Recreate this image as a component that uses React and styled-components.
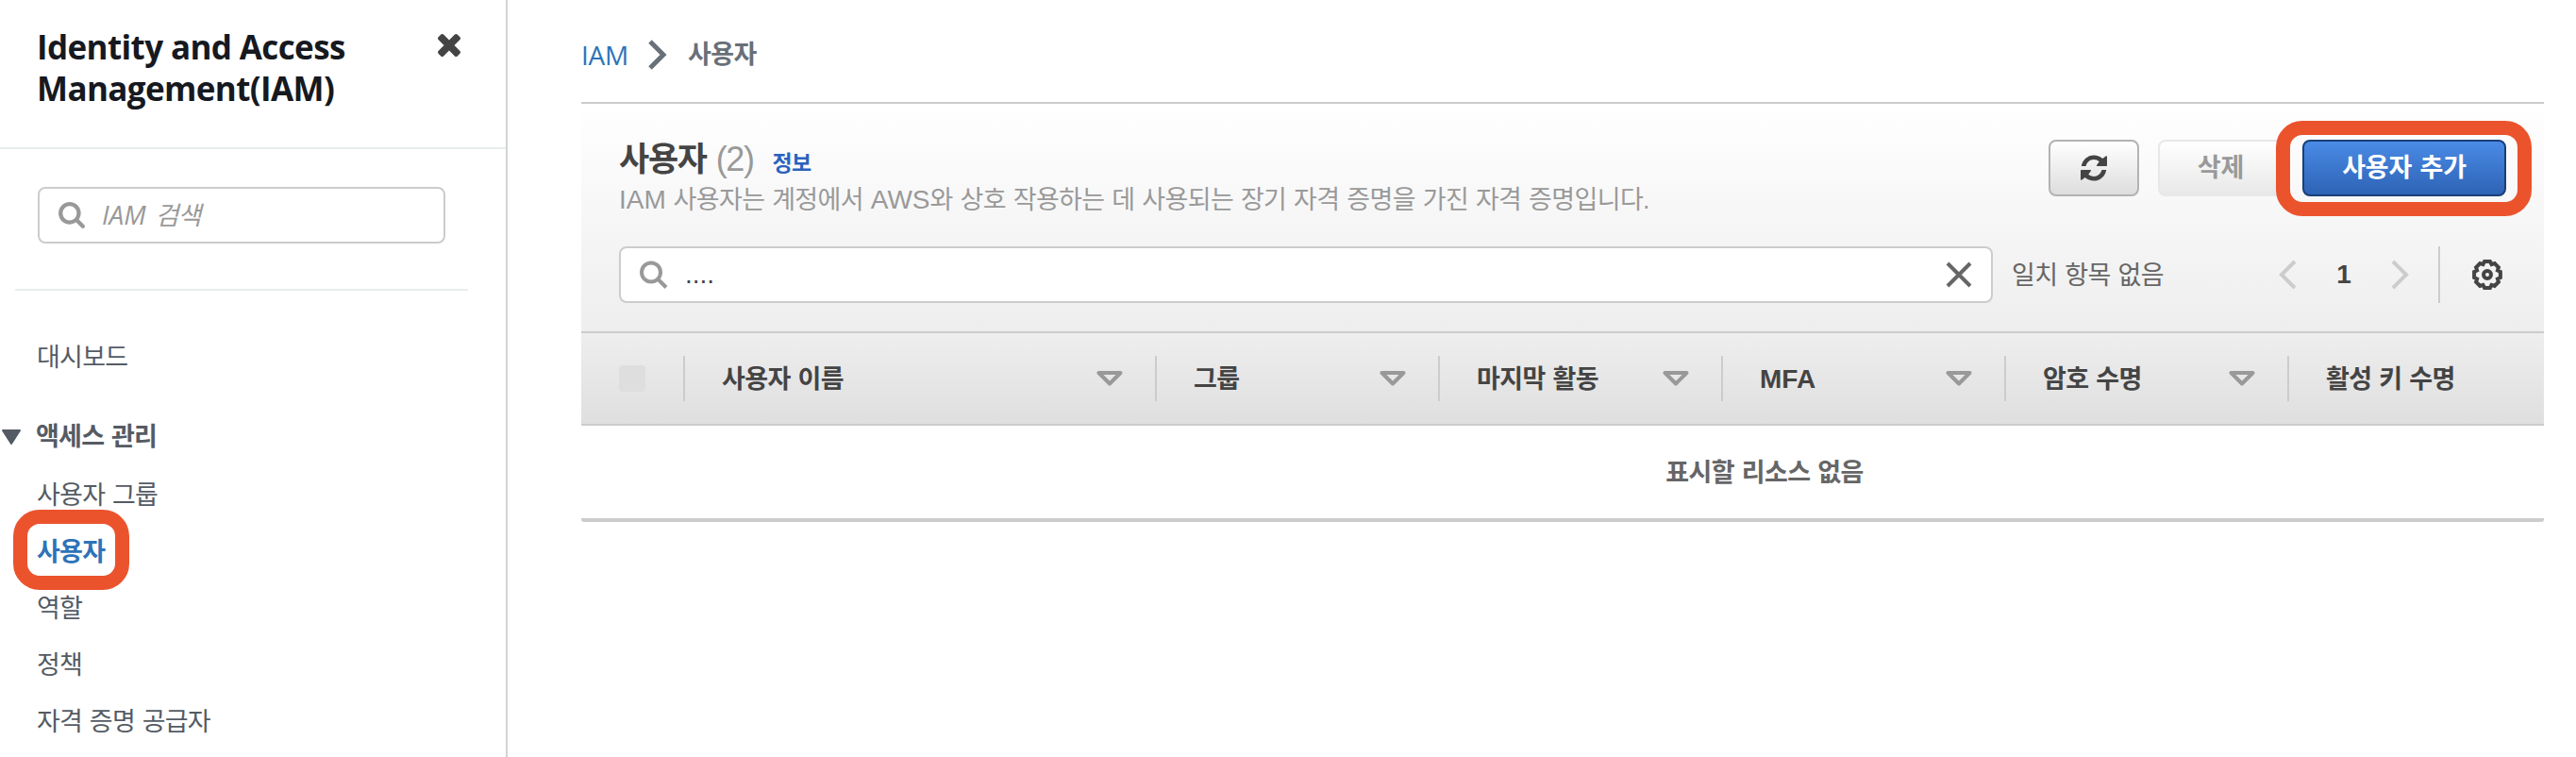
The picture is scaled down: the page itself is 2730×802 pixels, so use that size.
import React from "react";
import styled, { createGlobalStyle, css } from "styled-components";

const GlobalStyle = createGlobalStyle`
  *, *::before, *::after { box-sizing: border-box; }
  body {
    margin: 0;
    background: #fff;
    overflow: hidden;
    font-family: "Liberation Sans", "Noto Sans CJK KR", sans-serif;
    font-size: 27px;
    line-height: 40px;
    letter-spacing: -0.6px;
    word-spacing: 0.9px;
    color: #444;
  }
  button, input { font: inherit; letter-spacing: inherit; word-spacing: inherit; }
  svg { display: block; flex: none; }
`;

const HIGHLIGHT = "#eb532d";
const LINE = "#ccc";

const Page = styled.div`
  display: flex;
  width: 2730px;
  height: 802px;
  overflow: hidden;
`;

/* ---------- side navigation ---------- */

const Sidebar = styled.aside`
  flex: none;
  width: 538px;
  height: 802px;
  border-right: 2px solid #d0d5d5;
  color: #545b64;
  letter-spacing: -0.75px;
`;

const SidebarHeader = styled.header`
  display: flex;
  justify-content: space-between;
  align-items: flex-start;
  height: 158px;
  padding: 28px 48px 0 39px;
  border-bottom: 2px solid #eaeded;
`;

const SidebarTitle = styled.h1`
  margin: 0;
  font: 700 35px/44px "Open Sans", sans-serif;
  letter-spacing: -0.62px;
  word-spacing: 0;
  color: #16191f;
`;

const CloseButton = styled.button`
  margin: 8px 0 0;
  padding: 0;
  border: 0;
  background: none;
  color: #444;
`;

const SearchSection = styled.div`
  margin: 0 40px 0 16px;
  padding: 40px 24px 48px;
  border-bottom: 2px solid #eaeded;
`;

const SideSearch = styled.label`
  display: flex;
  align-items: center;
  gap: 18px;
  height: 60px;
  padding: 0 20px;
  border: 2px solid ${LINE};
  border-radius: 8px;
  background: #fff;
  color: #999;
  font-style: italic;
`;

const SearchPlaceholder = styled.span`
  word-spacing: 3px;
`;

const Ember = styled.span`
  font-family: "Open Sans", sans-serif;
  font-size: 28px;
  letter-spacing: 0;
`;

const Nav = styled.nav`
  padding-top: 51px;
`;

const NavItem = styled.a`
  display: block;
  height: 60px;
  padding-left: 39px;
  line-height: 40px;
  color: ${(p) => (p.$active ? "#2e73b8" : "inherit")};
  font-weight: ${(p) => (p.$active ? 700 : 400)};
`;

const NavGroup = styled.div`
  display: flex;
  align-items: center;
  gap: 16px;
  height: 40px;
  margin: 24px 0 22px;
  padding-left: 2px;
  font-weight: 700;
`;

const Marked = styled.span`
  position: relative;
  display: inline-flex;
  &::after {
    content: "";
    position: absolute;
    border: 15px solid ${HIGHLIGHT};
    border-radius: 28px;
    inset: ${(p) => p.$inset};
    pointer-events: none;
  }
`;

/* ---------- main content ---------- */

const Main = styled.main`
  flex: none;
  width: 2158px;
  padding-left: 78px;
`;

const Breadcrumbs = styled.nav`
  display: flex;
  align-items: center;
  height: 108px;
  padding-top: 8px;
  color: #687078;
  font-weight: 700;
`;

const CrumbLink = styled.a`
  width: 71px;
  color: #2e73b8;
  font: 400 28px/40px "Open Sans", sans-serif;
  letter-spacing: -0.3px;
`;

const CrumbCurrent = styled.span`
  margin-left: 22px;
`;

const Panel = styled.section`
  border-top: 2px solid ${LINE};
  border-bottom: 4px solid ${LINE};
  border-radius: 0 0 3px 3px;
  overflow: hidden;
`;

const PanelHeader = styled.header`
  height: 241px;
  padding: 37px 40px 0;
  background: linear-gradient(#fff, #eee);
`;

const HeadingRow = styled.div`
  display: flex;
  justify-content: space-between;
  height: 114px;
`;

const Heading = styled.h2`
  display: flex;
  align-items: baseline;
  height: 45px;
  margin: 0;
  font-size: 35px;
  line-height: 44px;
  letter-spacing: -1.3px;
`;

const Count = styled.span`
  margin-left: 10px;
  font-size: 36px;
  font-weight: 400;
  letter-spacing: -1.4px;
  color: #999;
`;

const InfoLink = styled.a`
  margin-left: 20px;
  font-size: 23px;
  letter-spacing: -0.6px;
  color: #2a62bd;
`;

const Description = styled.p`
  margin: 0;
  color: #999;
  letter-spacing: -0.63px;
`;

const Latin = styled.span`
  font-size: 28px;
  letter-spacing: 0;
`;

const Actions = styled.div`
  display: flex;
  gap: 20px;
  height: 60px;
  padding-top: 1px;
`;

const Button = styled.button`
  display: flex;
  align-items: center;
  justify-content: center;
  flex: none;
  width: ${(p) => p.$width}px;
  height: 60px;
  padding: 0;
  border: 2px solid #b3b3b3;
  border-radius: 8px;
  background: linear-gradient(#fff, #ddd);
  color: #444;
  font-weight: 700;
  letter-spacing: -0.15px;
  ${(p) =>
    p.$disabled &&
    css`
      border-color: #e8e8e8;
      background: linear-gradient(#fff, #e8e8e8);
      color: #999;
    `}
  ${(p) =>
    p.$primary &&
    css`
      border-color: #1a3f78;
      background: linear-gradient(#4a8be6, #2e63b5);
      color: #fff;
    `}
`;

const FilterRow = styled.div`
  display: flex;
  align-items: center;
  height: 60px;
`;

const FilterInput = styled.label`
  display: flex;
  align-items: center;
  flex: none;
  width: 1456px;
  height: 60px;
  padding: 0 20px;
  border: 2px solid ${LINE};
  border-radius: 8px;
  background: #fff;
`;

const FilterValue = styled.span`
  flex: 1;
  padding-left: 18px;
`;

const MatchText = styled.span`
  flex: 1;
  margin-left: 20px;
  padding-top: 1px;
  color: #666;
`;

const Pager = styled.div`
  display: flex;
  align-items: center;
  color: ${LINE};
`;

const PageNumber = styled.span`
  width: 100px;
  text-align: center;
  font-size: 28px;
  font-weight: 700;
  letter-spacing: 0;
  color: #444;
`;

const Settings = styled.div`
  display: flex;
  align-items: center;
  height: 60px;
  margin-left: 30px;
  padding: 0 4px 0 34px;
  border-left: 2px solid ${LINE};
`;

const TableHead = styled.div`
  display: flex;
  width: 2508px;
  height: 100px;
  padding: 24px 0;
  border-top: 2px solid ${LINE};
  border-bottom: 2px solid ${LINE};
  background: linear-gradient(#eee, #dfdfdf);
  font-weight: 700;
`;

const HeadCell = styled.div`
  display: flex;
  flex: none;
  align-items: center;
  justify-content: space-between;
  width: ${(p) => p.$width}px;
  height: 48px;
  padding: 0 34px 0 40px;
  border-right: 2px solid ${LINE};
  &:last-child { border-right: 0; }
`;

const HeadLabel = styled.span`
  padding-top: 1px;
  margin-left: -1px;
`;

const Checkbox = styled.span`
  width: 28px;
  height: 28px;
  border-radius: 4px;
  background: #dedede;
`;

const EmptyRow = styled.div`
  width: 2508px;
  height: 98px;
  padding-top: 1px;
  line-height: 98px;
  text-align: center;
  font-weight: 700;
  color: #666;
`;

/* ---------- icons ---------- */

const CloseIcon = () => (
  <svg width="24" height="24" viewBox="302 366 1188 1188" fill="currentColor">
    <path d="M1490 1322q0 40-28 68l-136 136q-28 28-68 28t-68-28l-294-294-294 294q-28 28-68 28t-68-28l-136-136q-28-28-28-68t28-68l294-294-294-294q-28-28-28-68t28-68l136-136q28-28 68-28t68 28l294 294 294-294q28-28 68-28t68 28l136 136q28 28 28 68t-28 68l-294 294 294 294q28 28 28 68z" />
  </svg>
);

const BoldSearchIcon = () => (
  <svg width="28" height="28" viewBox="64 128 1664 1664" fill="currentColor">
    <path d="M1216 832q0-185-131.5-316.5t-316.5-131.5-316.5 131.5-131.5 316.5 131.5 316.5 316.5 131.5 316.5-131.5 131.5-316.5zm512 832q0 52-38 90t-90 38q-54 0-90-38l-343-342q-179 124-399 124-143 0-273.5-55.5t-225-150-150-225-55.5-273.5 55.5-273.5 150-225 225-150 273.5-55.5 273.5 55.5 225 150 150 225 55.5 273.5q0 220-124 399l343 343q37 37 37 90z" />
  </svg>
);

const SearchIcon = () => (
  <svg width="30" height="30" viewBox="0 0 30 30" fill="none" stroke="#999" strokeWidth="4">
    <circle cx="12" cy="12.5" r="10" />
    <path d="M19 19.5l9 9" />
  </svg>
);

const ClearIcon = () => (
  <svg width="28" height="28" viewBox="0 0 28 28" fill="none" stroke="#666" strokeWidth="4">
    <path d="M2 2l24 24M26 2L2 26" />
  </svg>
);

const Chevron = ({ left, width = 4 }) => (
  <svg width="20" height="32" viewBox="0 0 20 32" fill="none" stroke="currentColor" strokeWidth={width}>
    <path d={left ? "M18 2L4 16l14 14" : "M2 2l14 14L2 30"} />
  </svg>
);

const RefreshIcon = () => (
  <svg width="28" height="28" viewBox="0 0 28 28" fill="currentColor">
    <path d="M0.8 12C1.8 5.2 7.4 0.4 14 0.4c3.6 0 6.8 1.3 9.300 3.500L26.600 1.400C27.200 0.900 28 1.300 28 2v9.200c0 .5-.3.800-.8.800h-9.400c-.8 0-1.100-.8-.6-1.300l2.500-3.500C18.100 5.800 16.100 5.100 14 5.100c-4.100 0-7.400 2.800-8.400 6.900z" />
    <path
      transform="rotate(180 14 14)"
      d="M0.8 12C1.8 5.2 7.4 0.4 14 0.4c3.6 0 6.8 1.3 9.300 3.500L26.600 1.400C27.200 0.900 28 1.300 28 2v9.200c0 .5-.3.800-.8.800h-9.400c-.8 0-1.100-.8-.6-1.300l2.500-3.500C18.100 5.800 16.100 5.100 14 5.100c-4.100 0-7.400 2.800-8.400 6.900z"
    />
  </svg>
);

const CaretIcon = () => (
  <svg width="20" height="16" viewBox="0 0 20 16" fill="currentColor" stroke="currentColor" strokeWidth="2" strokeLinejoin="round">
    <path d="M1 1h18l-9 14z" />
  </svg>
);

const SortIcon = () => (
  <svg width="28" height="16" viewBox="0 0 28 16" fill="none" stroke="#999" strokeWidth="4" strokeLinejoin="round">
    <path d="M2.500 2h23L14 13.500z" />
  </svg>
);

const GEAR_OUTLINE = Array.from({ length: 8 }, (_, tooth) =>
  [
    [-12, 14.2],
    [12, 14.2],
    [22.5, 11.8],
  ].map(([offset, radius]) => {
    const angle = ((tooth * 45 + offset) * Math.PI) / 180;
    return `${(16 + radius * Math.cos(angle)).toFixed(2)},${(16 + radius * Math.sin(angle)).toFixed(2)}`;
  })
)
  .flat()
  .join(" ");

const GearIcon = () => (
  <svg width="32" height="32" viewBox="0 0 32 32" fill="none" stroke="#444" strokeWidth="4">
    <polygon points={GEAR_OUTLINE} />
    <circle cx="16" cy="16" r="4" />
  </svg>
);

const COLUMNS = [
  ["사용자 이름", 500],
  ["그룹", 300],
  ["마지막 활동", 300],
  ["MFA", 300],
  ["암호 수명", 300],
  ["활성 키 수명", 698],
];

export default function App() {
  return (
    <Page>
      <GlobalStyle />
      <Sidebar>
        <SidebarHeader>
          <SidebarTitle>
            Identity and Access
            <br />
            Management(IAM)
          </SidebarTitle>
          <CloseButton aria-label="닫기">
            <CloseIcon />
          </CloseButton>
        </SidebarHeader>
        <SearchSection>
          <SideSearch>
            <BoldSearchIcon />
            <SearchPlaceholder>
              <Ember>IAM</Ember> 검색
            </SearchPlaceholder>
          </SideSearch>
        </SearchSection>
        <Nav>
          <NavItem>대시보드</NavItem>
          <NavGroup>
            <CaretIcon />
            액세스 관리
          </NavGroup>
          <NavItem>사용자 그룹</NavItem>
          <NavItem $active>
            <Marked $inset="-25px -26px -20px -25px">사용자</Marked>
          </NavItem>
          <NavItem>역할</NavItem>
          <NavItem>정책</NavItem>
          <NavItem>자격 증명 공급자</NavItem>
        </Nav>
      </Sidebar>
      <Main>
        <Breadcrumbs>
          <CrumbLink>IAM</CrumbLink>
          <Chevron width={5} />
          <CrumbCurrent>사용자</CrumbCurrent>
        </Breadcrumbs>
        <Panel>
          <PanelHeader>
            <HeadingRow>
              <div>
                <Heading>
                  사용자
                  <Count>(2)</Count>
                  <InfoLink>정보</InfoLink>
                </Heading>
                <Description>
                  <Latin>IAM</Latin> 사용자는 계정에서 <Latin>AWS</Latin>와 상호 작용하는 데 사용되는 장기 자격 증명을 가진 자격 증명입니다.
                </Description>
              </div>
              <Actions>
                <Button $width={96} aria-label="새로 고침">
                  <RefreshIcon />
                </Button>
                <Button $width={133} $disabled>
                  삭제
                </Button>
                <Marked $inset="-20px -27px -22px -28px">
                  <Button $width={216} $primary>
                    사용자 추가
                  </Button>
                </Marked>
              </Actions>
            </HeadingRow>
            <FilterRow>
              <FilterInput>
                <SearchIcon />
                <FilterValue>
                  <Latin>....</Latin>
                </FilterValue>
                <ClearIcon />
              </FilterInput>
              <MatchText>일치 항목 없음</MatchText>
              <Pager>
                <Chevron left />
                <PageNumber>1</PageNumber>
                <Chevron />
              </Pager>
              <Settings>
                <GearIcon />
              </Settings>
            </FilterRow>
          </PanelHeader>
          <TableHead>
            <HeadCell $width={110}>
              <Checkbox />
            </HeadCell>
            {COLUMNS.map(([label, width]) => (
              <HeadCell key={label} $width={width}>
                <HeadLabel>{label === "MFA" ? <Latin>{label}</Latin> : label}</HeadLabel>
                <SortIcon />
              </HeadCell>
            ))}
          </TableHead>
          <EmptyRow>표시할 리소스 없음</EmptyRow>
        </Panel>
      </Main>
    </Page>
  );
}
